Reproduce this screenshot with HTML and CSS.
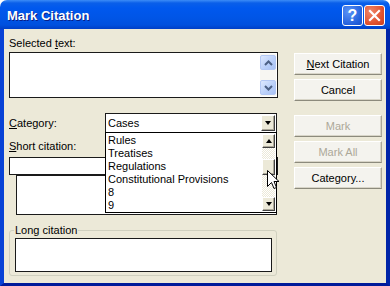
FILE: index.html
```html
<!DOCTYPE html>
<html lang="en">
<head>
    <meta charset="UTF-8">
    <title>Mark Citation</title>
    <link rel="stylesheet" href="styles.css">
</head>
<body>
    <div class="window">
        <div class="titlebar">
            <span class="title">Mark Citation</span>
            <div class="caption-btns">
                <div class="cap help">?</div>
                <div class="cap close">
                    <svg width="13" height="13" viewBox="0 0 13 13">
                        <path d="M2 2 L11 11 M11 2 L2 11" stroke="#fff" stroke-width="2.2" stroke-linecap="square"/>
                    </svg>
                </div>
            </div>
        </div>

        <div class="frame">
            <div class="left">
                <div class="label">Selected <u>t</u>ext:</div>
                <div class="textbox selected">
                    <div class="xp-scroll">
                        <div class="xp-btn">
                            <svg width="9" height="6" viewBox="0 0 9 6"><path d="M1 5 L4.5 1.5 L8 5" fill="none" stroke="#4d6185" stroke-width="2"/></svg>
                        </div>
                        <div class="xp-btn">
                            <svg width="9" height="6" viewBox="0 0 9 6"><path d="M1 1 L4.5 4.5 L8 1" fill="none" stroke="#4d6185" stroke-width="2"/></svg>
                        </div>
                    </div>
                </div>

                <div class="category-row">
                    <div class="label"><u>C</u>ategory:</div>
                    <div class="combo">
                        <span class="combo-value">Cases</span>
                        <div class="classic-btn combo-btn"><span class="arrow-down"></span></div>

                        <div class="dropdown">
                            <div class="items">
                                <div>Rules</div>
                                <div>Treatises</div>
                                <div>Regulations</div>
                                <div>Constitutional Provisions</div>
                                <div>8</div>
                                <div>9</div>
                            </div>
                            <div class="classic-scroll">
                                <div class="classic-btn sb-btn"><span class="arrow-up"></span></div>
                                <div class="track">
                                    <div class="classic-btn thumb"></div>
                                </div>
                                <div class="classic-btn sb-btn"><span class="arrow-down"></span></div>
                            </div>
                        </div>

                        <svg class="cursor" width="13" height="20" viewBox="0 0 13 20">
                            <path d="M0.5 0.5 L0.5 16.5 L4.5 12.5 L7 18.5 L9.5 17.5 L7 11.5 L12 11.5 Z" fill="#fff" stroke="#000" stroke-width="1"/>
                        </svg>
                    </div>
                </div>

                <div class="label short-label"><u>S</u>hort citation:</div>
                <div class="textbox short"></div>
                <div class="textbox short-list"></div>

                <fieldset class="group">
                    <legend>Long citation</legend>
                    <div class="textbox long"></div>
                </fieldset>
            </div>

            <div class="right">
                <div class="btn"><u>N</u>ext Citation</div>
                <div class="btn">Cancel</div>
                <div class="btn disabled gap">Mark</div>
                <div class="btn disabled">Mark All</div>
                <div class="btn">Category...</div>
            </div>
        </div>
    </div>
</body>
</html>
```

FILE: styles.css
```css
body {
    margin: 0;
    font-family: "Liberation Sans", Arial, sans-serif;
    font-size: 11px;
    line-height: 13px;
    color: #000;
    background: #fff;
}
.window {
    width: 390px;
    height: 286px;
    display: flex;
    flex-direction: column;
}
.titlebar {
    height: 29px;
    flex-shrink: 0;
    display: flex;
    align-items: center;
    justify-content: space-between;
    padding: 0 5px 0 7px;
    box-sizing: border-box;
    border-radius: 7px 7px 0 0;
    background: linear-gradient(#3c8cf7 0, #0a5fe9 3px, #0058ee 8px, #0055e6 18px, #0050de 25px, #003fc6 29px);
}
.title {
    color: #fff;
    font-weight: bold;
    font-size: 13px;
    text-shadow: 1px 1px #0a1e86;
    margin-top: 1px;
}
.caption-btns {
    display: flex;
    gap: 1px;
    margin-top: 1px;
}
.cap {
    width: 19px;
    height: 19px;
    border: 1px solid #fff;
    border-radius: 3px;
    display: flex;
    align-items: center;
    justify-content: center;
    color: #fff;
    font-weight: bold;
    font-size: 16px;
}
.help {
    background: radial-gradient(circle at 30% 30%, #5b94f7, #2460dc 70%, #1a4fc8);
}
.close {
    background: radial-gradient(circle at 30% 30%, #f08668, #e0502d 65%, #c6401f);
}
.frame {
    flex: 1;
    display: flex;
    background: #ece9d8;
    border-style: solid;
    border-width: 0 4px 3px 4px;
    border-color: #0846d8 #0024a8 #001a9a #0842d6;
    padding: 8px 0 0 5px;
}
.left {
    width: 269px;
    display: flex;
    flex-direction: column;
}
.label {
    height: 13px;
}
.textbox {
    background: #fff;
    border: 1px solid #1a1a1a;
    box-sizing: border-box;
}
.selected {
    height: 46px;
    margin-top: 2px;
    display: flex;
    justify-content: flex-end;
    padding: 1px;
}
.xp-scroll {
    width: 16px;
    display: flex;
    flex-direction: column;
    justify-content: space-between;
    background: #f7f6f2;
    padding: 1px 0;
}
.xp-btn {
    height: 15px;
    border: 1px solid #b4c8f4;
    border-radius: 2px;
    background: linear-gradient(135deg, #dde8fe, #b9cff9 60%, #a9c2f4);
    display: flex;
    align-items: center;
    justify-content: center;
    box-sizing: border-box;
}
.category-row {
    display: flex;
    align-items: center;
    margin-top: 15px;
}
.category-row .label {
    width: 96px;
    margin-top: 1px;
}
.combo {
    position: relative;
    width: 172px;
    height: 20px;
    box-sizing: border-box;
    border: 1px solid #1a1a1a;
    background: #fff;
    display: flex;
    align-items: center;
    justify-content: space-between;
    padding: 0 1px 0 2px;
}
.classic-btn {
    background: #ece9d8;
    border: 1px solid;
    border-color: #fff #404040 #404040 #fff;
    box-shadow: inset -1px -1px #aca899;
    box-sizing: border-box;
    display: flex;
    align-items: center;
    justify-content: center;
}
.combo-btn {
    width: 14px;
    height: 16px;
}
.arrow-down, .arrow-up {
    width: 0;
    height: 0;
    border-left: 3.5px solid transparent;
    border-right: 3.5px solid transparent;
}
.arrow-down {
    border-top: 4px solid #000;
}
.arrow-up {
    border-bottom: 4px solid #000;
}
.dropdown {
    position: absolute;
    left: -1px;
    top: 18px;
    width: 172px;
    height: 81px;
    box-sizing: border-box;
    border: 1px solid #000;
    background: #fff;
    display: flex;
    z-index: 2;
}
.items {
    flex: 1;
    padding: 1px 0 0 2px;
}
.items div {
    height: 13px;
}
.classic-scroll {
    width: 13px;
    display: flex;
    flex-direction: column;
    padding: 1px 1px 1px 0;
}
.sb-btn {
    height: 14px;
    flex-shrink: 0;
}
.track {
    flex: 1;
    background: repeating-conic-gradient(#ece9d8 0 25%, #fff 0 50%) 0 0 / 2px 2px;
    padding-top: 11px;
}
.thumb {
    height: 16px;
}
.cursor {
    position: absolute;
    left: 161px;
    top: 56px;
    z-index: 3;
}
.short-label {
    margin-top: 7px;
}
.short {
    height: 18px;
    margin-top: 4px;
}
.short-list {
    height: 40px;
    width: 261px;
    margin-left: 7px;
}
.group {
    margin: 9px 0 0 0;
    width: 268px;
    box-sizing: border-box;
    border: 1px solid #d0d0bf;
    border-radius: 3px;
    padding: 1px 4px 3px 5px;
}
.group legend {
    padding: 0 1px;
    margin-left: -1px;
    line-height: 13px;
}
.long {
    height: 34px;
}
.right {
    width: 88px;
    margin-left: 16px;
    display: flex;
    flex-direction: column;
    gap: 4px;
    padding-top: 16px;
}
.btn {
    height: 22px;
    box-sizing: border-box;
    border: 1px solid;
    border-color: #fff #aca899 #8c8a7c #fff;
    box-shadow: inset -1px -1px #d8d5c8;
    background: #f4f3ee;
    display: flex;
    align-items: center;
    justify-content: center;
}
.btn.disabled {
    color: #aca899;
}
.btn.gap {
    margin-top: 10px;
}
```
